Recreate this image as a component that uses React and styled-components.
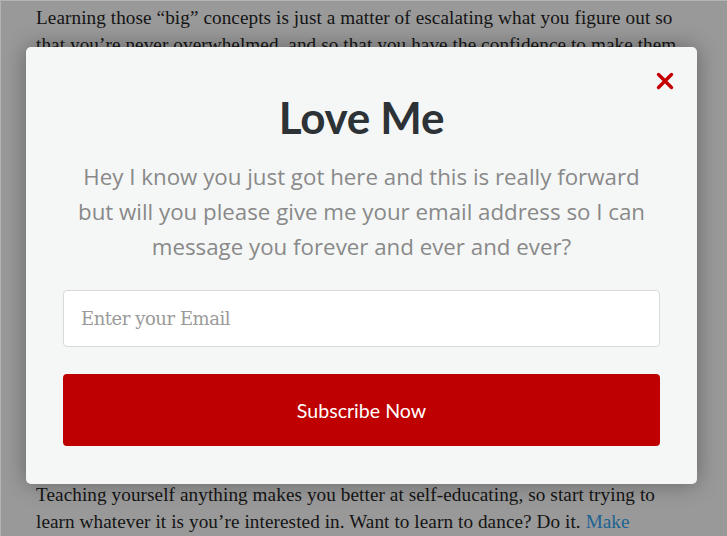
import React from "react";
import styled, { createGlobalStyle } from "styled-components";

const GlobalStyle = createGlobalStyle`
  html, body {
    margin: 0;
    padding: 0;
  }
  body {
    background: #999999;
  }
`;

const Page = styled.div`
  position: relative;
  width: 727px;
  height: 536px;
  overflow: hidden;
  box-sizing: border-box;
  background: #999999;
  border-top: 1px solid #b4b4b4;
  border-left: 1px solid #b4b4b4;
`;

const Article = styled.div`
  width: 648px;
  padding: 4px 0 0 35px;
  font-family: "Liberation Serif", Georgia, serif;
  font-size: 19.2px;
  line-height: 26.5px;
  color: #141414;
  letter-spacing: 0.08px;
`;

const Paragraph = styled.p`
  margin: 0;
  height: ${(p) => (p.$height ? `${p.$height}px` : "auto")};
  overflow: hidden;
`;

const Link = styled.a`
  color: #1d6391;
  text-decoration: none;
`;

const Modal = styled.div`
  position: absolute;
  left: 25px;
  top: 46px;
  width: 671px;
  box-sizing: border-box;
  padding: 40px 37px 38px 37px;
  background: #f5f7f7;
  border-radius: 5px;
  box-shadow: 0 0 22px rgba(0, 0, 0, 0.35);
  display: flex;
  flex-direction: column;
  align-items: center;
`;

const Close = styled.button`
  position: absolute;
  top: 24px;
  right: 22px;
  width: 20px;
  height: 20px;
  padding: 0;
  border: none;
  background: none;
  display: flex;
  align-items: center;
  justify-content: center;
  cursor: pointer;
`;

const Title = styled.h1`
  margin: 0;
  font-family: Lato, "Noto Sans", sans-serif;
  font-weight: 700;
  font-size: 44px;
  line-height: 60px;
  color: #2c3236;
  letter-spacing: -0.3px;
`;

const Lead = styled.p`
  margin: 12px 0 0;
  font-family: "Open Sans", "Noto Sans", sans-serif;
  font-size: 22.3px;
  line-height: 35px;
  color: #898989;
  text-align: center;
  letter-spacing: 0;
`;

const Form = styled.form`
  width: 100%;
  margin-top: 26px;
  display: flex;
  flex-direction: column;
  gap: 27px;
`;

const EmailInput = styled.input`
  width: 100%;
  height: 57px;
  box-sizing: border-box;
  padding: 0 17px;
  border: 1px solid #d8dada;
  border-radius: 4px;
  background: #ffffff;
  font-family: "DejaVu Serif", Georgia, serif;
  font-size: 18px;
  letter-spacing: -0.45px;
  color: #333;
  outline: none;

  &::placeholder {
    color: #9a9a9a;
  }
`;

const SubmitButton = styled.button`
  width: 100%;
  height: 72px;
  border: none;
  border-radius: 4px;
  background: #bf0000;
  color: #ffffff;
  font-family: Lato, "Noto Sans", sans-serif;
  font-size: 19.6px;
  cursor: pointer;
`;

function CloseIcon() {
  return (
    <svg width="18" height="18" viewBox="0 0 18 18">
      <path
        d="M2.5 2.5 L15.5 15.5 M15.5 2.5 L2.5 15.5"
        stroke="#c50000"
        strokeWidth="3.4"
        strokeLinecap="round"
      />
    </svg>
  );
}

export default function App() {
  return (
    <Page>
      <GlobalStyle />
      <Article>
        <Paragraph $height={477}>
          Learning those “big” concepts is just a matter of escalating what you figure out so
          that you’re never overwhelmed, and so that you have the confidence to make them
          your own. Start small, keep at it, and build on every little win you collect along
          the way until the big things feel like small things.
        </Paragraph>
        <Paragraph>
          Teaching yourself anything makes you better at self-educating, so start trying to
          learn whatever it is you’re interested in. Want to learn to dance? Do it.{" "}
          <Link href="#">Make</Link>
        </Paragraph>
      </Article>
      <Modal>
        <Close aria-label="Close">
          <CloseIcon />
        </Close>
        <Title>Love Me</Title>
        <Lead>
          Hey I know you just got here and this is really forward
          <br />
          but will you please give me your email address so I can
          <br />
          message you forever and ever and ever?
        </Lead>
        <Form onSubmit={(e) => e.preventDefault()}>
          <EmailInput type="email" placeholder="Enter your Email" />
          <SubmitButton type="submit">Subscribe Now</SubmitButton>
        </Form>
      </Modal>
    </Page>
  );
}
